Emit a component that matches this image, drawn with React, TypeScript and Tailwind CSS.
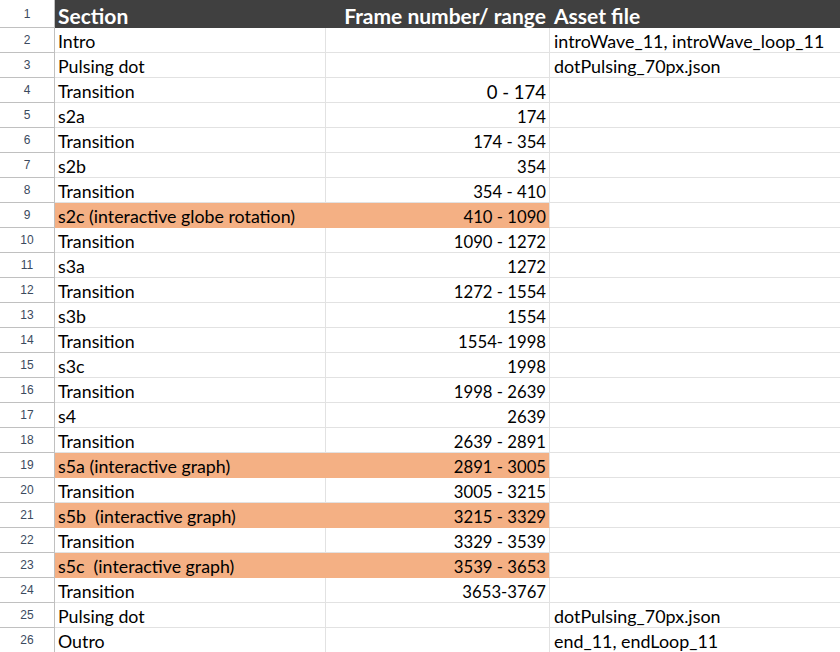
import React from "react";

type Row = { a: string; b: string; c: string; hl?: boolean; big?: boolean };

const rows: Row[] = [
  { a: "Intro", b: "", c: "introWave_11, introWave_loop_11" },
  { a: "Pulsing dot", b: "", c: "dotPulsing_70px.json" },
  { a: "Transition", b: "0 - 174", c: "", big: true },
  { a: "s2a", b: "174", c: "" },
  { a: "Transition", b: "174 - 354", c: "" },
  { a: "s2b", b: "354", c: "" },
  { a: "Transition", b: "354 - 410", c: "" },
  { a: "s2c (interactive globe rotation)", b: "410 - 1090", c: "", hl: true },
  { a: "Transition", b: "1090 - 1272", c: "" },
  { a: "s3a", b: "1272", c: "" },
  { a: "Transition", b: "1272 - 1554", c: "" },
  { a: "s3b", b: "1554", c: "" },
  { a: "Transition", b: "1554- 1998", c: "" },
  { a: "s3c", b: "1998", c: "" },
  { a: "Transition", b: "1998 - 2639", c: "" },
  { a: "s4", b: "2639", c: "" },
  { a: "Transition", b: "2639 - 2891", c: "" },
  { a: "s5a (interactive graph)", b: "2891 - 3005", c: "", hl: true },
  { a: "Transition", b: "3005 - 3215", c: "" },
  { a: "s5b  (interactive graph)", b: "3215 - 3329", c: "", hl: true },
  { a: "Transition", b: "3329 - 3539", c: "" },
  { a: "s5c  (interactive graph)", b: "3539 - 3653", c: "", hl: true },
  { a: "Transition", b: "3653-3767", c: "" },
  { a: "Pulsing dot", b: "", c: "dotPulsing_70px.json" },
  { a: "Outro", b: "", c: "end_11, endLoop_11" },
];

const font = { fontFamily: "Lato, 'Liberation Sans', sans-serif" };
const numFont = { fontFamily: "'Liberation Sans', Arial, sans-serif" };

export default function App() {
  return (
    <div className="w-[840px] h-[652px] overflow-hidden bg-white text-[#000]" style={font}>
      {/* header row */}
      <div className="flex h-[28px]">
        <div className="w-[55px] shrink-0 border-r border-b border-[#c0c0c0] flex items-center justify-center text-[12px] text-[#3b4a5e]" style={numFont}>
          1
        </div>
        <div className="flex-1 flex bg-[#404040] text-white font-bold text-[21px] leading-none">
          <div className="w-[271px] shrink-0 flex items-end pb-[2px] pl-[3px]">Section</div>
          <div className="w-[224px] shrink-0 flex items-end justify-end pb-[2px] pr-[4px]">Frame number/ range</div>
          <div className="flex-1 flex items-end pb-[2px] pl-[4px]">Asset file</div>
        </div>
      </div>
      {rows.map((r, i) => (
        <div key={i} className="flex h-[25px]">
          <div className="w-[55px] shrink-0 border-r border-b border-[#c0c0c0] flex items-center justify-center text-[12px] text-[#3b4a5e]" style={numFont}>
            {i + 2}
          </div>
          <div className={`w-[271px] shrink-0 flex items-end pb-[1px] pl-[3px] text-[17.8px] leading-none whitespace-pre border-b border-r ${r.hl ? "bg-[#f4b084] border-[#f4b084]" : "border-[#e2e2e2]"}`}>
            {r.a}
          </div>
          <div className={`w-[224px] shrink-0 flex items-end justify-end pb-[1px] pr-[3px] leading-none whitespace-pre border-b border-r ${r.big ? "text-[18.5px]" : "text-[16.7px]"} ${r.hl ? "bg-[#f4b084] border-b-[#f4b084] border-r-[#e2e2e2]" : "border-[#e2e2e2]"}`}>
            {r.b}
          </div>
          <div className="flex-1 flex items-end pb-[1px] pl-[4px] text-[17.9px] leading-none whitespace-pre border-b border-[#e2e2e2]">
            {r.c}
          </div>
        </div>
      ))}
    </div>
  );
}
